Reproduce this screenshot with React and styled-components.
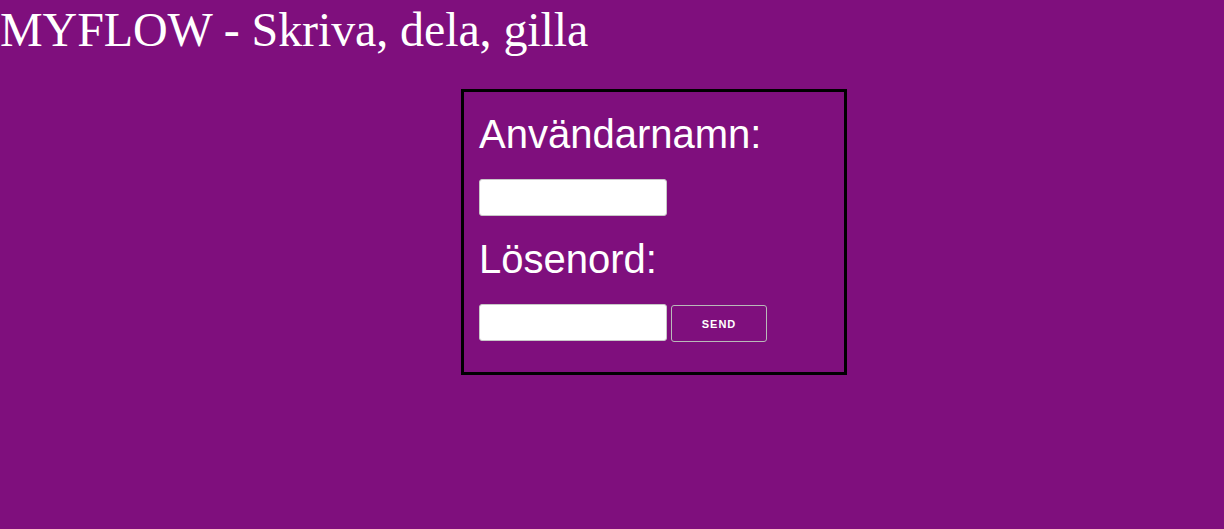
import React from 'react'
import styled, { createGlobalStyle } from 'styled-components'

const GlobalStyle = createGlobalStyle`
  html, body {
    margin: 0;
    padding: 0;
    height: 100%;
    background: #7f0f7d;
  }

  #root {
    min-height: 100%;
  }
`

export default function App() {
  return (
    <>
      <GlobalStyle />
      <Page>
        <Title>MYFLOW - Skriva, dela, gilla</Title>
        <LoginBox onSubmit={(e) => e.preventDefault()}>
          <Label htmlFor="user">Användarnamn:</Label>
          <Row>
            <Input id="user" type="text" />
          </Row>
          <Label htmlFor="pass">Lösenord:</Label>
          <Row>
            <Input id="pass" type="password" />
            <SendButton type="submit">SEND</SendButton>
          </Row>
        </LoginBox>
      </Page>
    </>
  )
}

const Page = styled.div`
  min-height: 529px;
  background: #7f0f7d;
  color: #fff;
  overflow: hidden;
`

const Title = styled.h1`
  margin: 0;
  padding-top: 2px;
  font-family: 'Liberation Serif', 'Times New Roman', serif;
  font-size: 48px;
  font-weight: 400;
  letter-spacing: -0.1px;
  line-height: 55px;
  color: #fff;
`

const LoginBox = styled.form`
  box-sizing: border-box;
  width: 386px;
  margin: 32px 0 0 461px;
  padding: 19px 15px 30px;
  border: 3px solid #000;
  font-family: 'Liberation Sans', Arial, Helvetica, sans-serif;
`

const Label = styled.label`
  display: block;
  font-size: 40px;
  line-height: 46px;
  color: #fff;
`

const Row = styled.div`
  display: flex;
  align-items: flex-start;
  gap: 4px;
  margin: 22px 0 20px;

  &:last-child {
    margin-bottom: 0;
  }
`

const Input = styled.input`
  box-sizing: border-box;
  width: 188px;
  height: 37px;
  margin: 0;
  padding: 0 8px;
  background: #fff;
  border: 1px solid #c8c8c8;
  border-radius: 3px;
  font-size: 16px;
  outline: none;
`

const SendButton = styled.button`
  box-sizing: border-box;
  width: 96px;
  height: 37px;
  margin-top: 1px;
  background: transparent;
  border: 1px solid #b9b9b9;
  border-radius: 3px;
  color: #fff;
  font-family: 'Liberation Sans', Arial, sans-serif;
  font-size: 11px;
  font-weight: 700;
  letter-spacing: 1px;
  cursor: pointer;
`
